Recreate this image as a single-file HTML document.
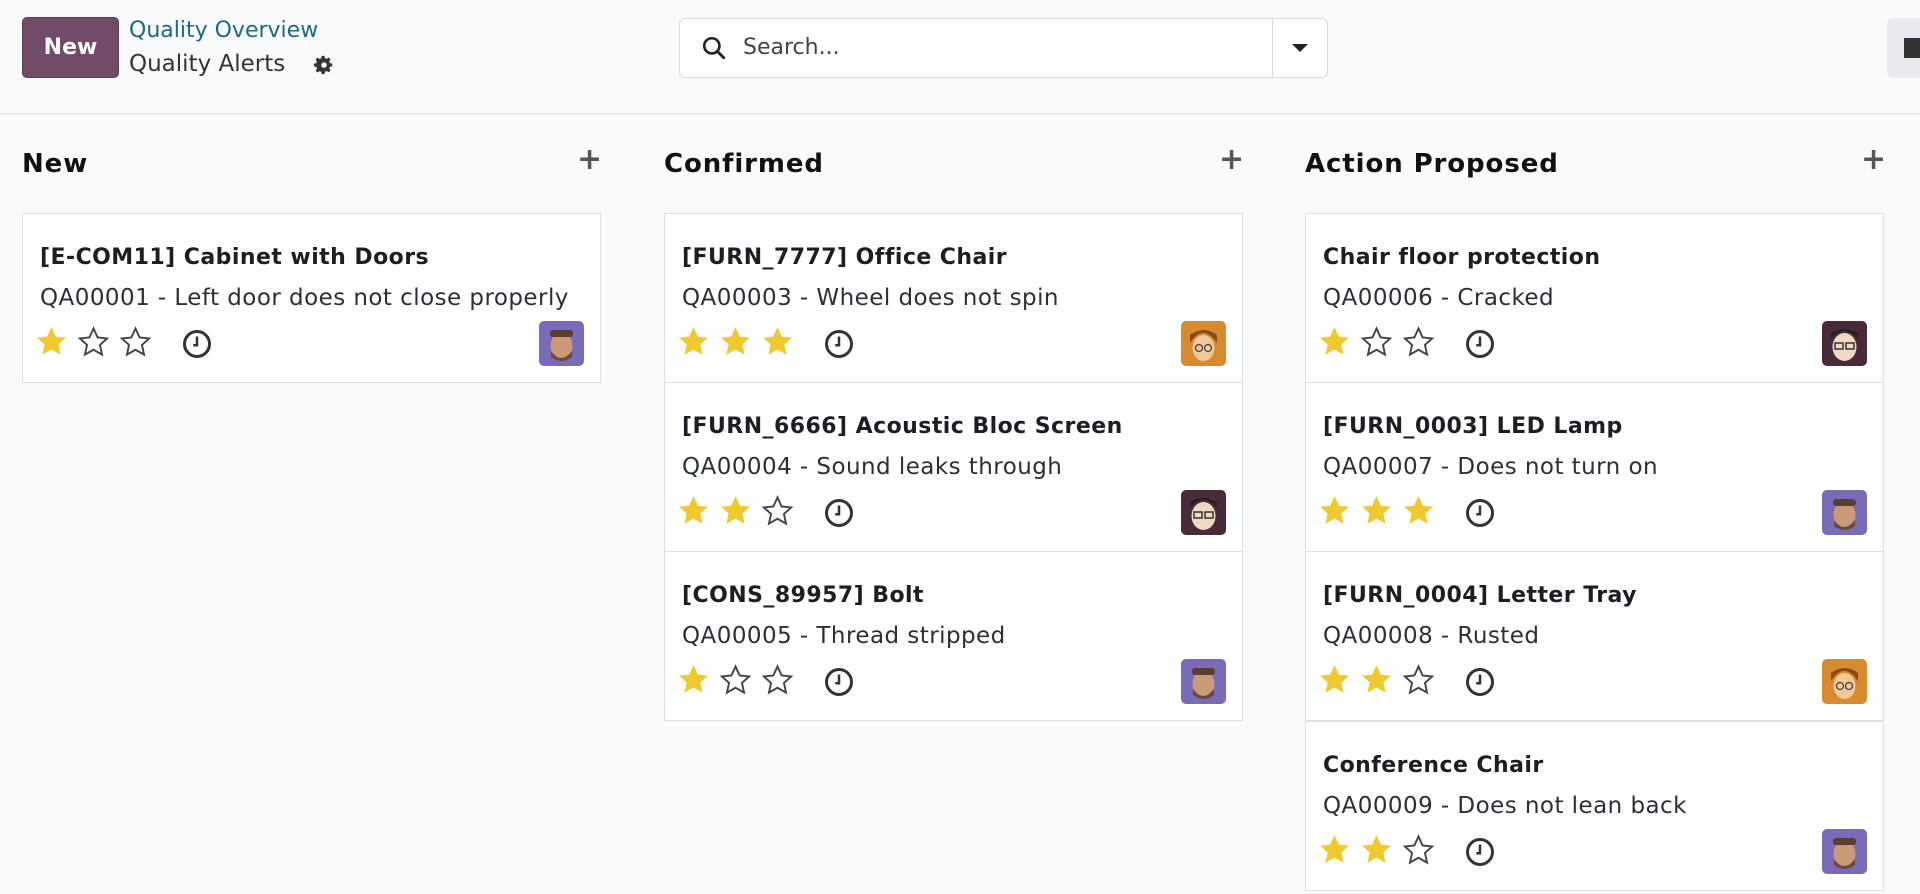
<!DOCTYPE html>
<html><head><meta charset="utf-8"><style>
*{box-sizing:border-box;margin:0;padding:0}
body{width:1920px;height:894px;overflow:hidden;background:#f9fafb;font-family:"DejaVu Sans","Liberation Sans",sans-serif;color:#1f2328;position:relative}
.a{position:absolute;white-space:nowrap}
.newbtn{left:22px;top:17px;width:97px;height:61px;background:#714b67;border:1px solid #5b3c53;border-radius:5px;color:#fff;font-size:22px;font-weight:bold;display:flex;align-items:center;justify-content:center}
.hdrline{left:0;top:113px;width:1920px;height:2px;background:#e4e6e9}
.search{left:679px;top:18px;width:649px;height:60px;border:1px solid #d8dadd;border-radius:6px;background:#fff}
.col{font-size:26px;font-weight:bold;color:#111;letter-spacing:0.9px}
.plus{font-size:30px;font-weight:bold;color:#555}
.card{position:absolute;background:#fff;border:1px solid #dde0e4;width:579px;height:170px}
.card .t{position:absolute;left:17px;top:31px;font-size:22px;font-weight:bold;color:#1b1f24;white-space:nowrap;letter-spacing:0.45px}
.card .s{position:absolute;left:17px;top:71px;font-size:23px;color:#2b2f36;white-space:nowrap;letter-spacing:0.45px}
.card .st{position:absolute;left:12px;top:111px;display:flex;gap:9px}
.card .cl{position:absolute;left:159px;top:115px}
.card .av{position:absolute;right:16px;top:107px;width:45px;height:45px;border-radius:5px;overflow:hidden}
</style></head><body>
<div class="a newbtn">New</div>
<div class="a" style="left:129px;top:18px;font-size:22px;color:#1d6a80">Quality Overview</div>
<div class="a" style="left:129px;top:51px;font-size:23px;color:#333">Quality Alerts</div>
<svg class="a" style="left:313px;top:54px" width="22" height="22" viewBox="0 0 24 24"><path fill="#333" d="M12 8a4 4 0 100 8 4 4 0 000-8zm9 5.5v-3l-2.6-.5a7 7 0 00-.8-1.9l1.5-2.2-2.1-2.1-2.2 1.5a7 7 0 00-1.9-.8L12.5 2h-3l-.5 2.6a7 7 0 00-1.9.8L4.9 3.9 2.8 6l1.5 2.2a7 7 0 00-.8 1.9L1 10.5v3l2.6.5c.2.7.4 1.3.8 1.9l-1.5 2.2 2.1 2.1 2.2-1.5c.6.4 1.2.6 1.9.8l.4 2.5h3l.5-2.6c.7-.2 1.3-.4 1.9-.8l2.2 1.5 2.1-2.1-1.5-2.2c.4-.6.6-1.2.8-1.9z"/><circle cx="12" cy="12" r="3" fill="#f9fafb"/></svg>
<div class="a search"></div>
<svg class="a" style="left:701px;top:35px" width="26" height="26" viewBox="0 0 24 24"><circle cx="10" cy="10" r="7" fill="none" stroke="#222" stroke-width="2.4"/><path d="M15 15l6 6" stroke="#222" stroke-width="2.6" stroke-linecap="round"/></svg>
<div class="a" style="left:743px;top:35px;font-size:22px;color:#444">Search...</div>
<div class="a" style="left:1272px;top:19px;width:1px;height:58px;background:#d8dadd"></div>
<div class="a" style="left:1292px;top:44px;width:0;height:0;border-left:8px solid transparent;border-right:8px solid transparent;border-top:8px solid #222"></div>
<div class="a" style="left:1887px;top:18px;width:60px;height:60px;background:#e8eaed;border-radius:6px"></div>
<div class="a" style="left:1904px;top:38px;width:16px;height:20px;background:#333"></div>
<div class="a hdrline"></div>

<div class="a col" style="left:22px;top:149px">New</div>
<div class="a plus" style="left:577px;top:142px">+</div>
<div class="a col" style="left:664px;top:149px">Confirmed</div>
<div class="a plus" style="left:1219px;top:142px">+</div>
<div class="a col" style="left:1305px;top:149px">Action Proposed</div>
<div class="a plus" style="left:1861px;top:142px">+</div>

<svg width="0" height="0" style="position:absolute"><defs>
<symbol id="sf" viewBox="0 0 24 24"><path fill="#f1c92c" d="M12 1.5l3.2 7 7.3.7-5.5 5 1.6 7.4L12 17.8l-6.6 3.8L7 14.2l-5.5-5 7.3-.7z"/></symbol>
<symbol id="se" viewBox="0 0 24 24"><path fill="none" stroke="#444" stroke-width="1.4" d="M12 2.5l3 6.6 6.9.7-5.2 4.7 1.5 7L12 18l-6.2 3.5 1.5-7L2.1 9.8 9 9.1z"/></symbol>
<symbol id="ck" viewBox="0 0 24 24"><circle cx="12" cy="12" r="10" fill="none" stroke="#333" stroke-width="2.4"/><path d="M12 6v7H9" fill="none" stroke="#333" stroke-width="2"/></symbol>
<symbol id="fa" viewBox="0 0 45 45"><ellipse cx="22.5" cy="25" rx="11" ry="14" fill="#c99a78"/><rect x="11" y="9" width="23" height="7" rx="3" fill="#5a3e2e"/><path d="M12 30q10 14 21 0v6q-10 8-21 0z" fill="#6b4a36"/></symbol>
<symbol id="fb" viewBox="0 0 45 45"><ellipse cx="22.5" cy="26" rx="12" ry="14" fill="#f2d9c2"/><path d="M9 18q13-16 27 0v-6q-13-8-27 0z" fill="#222"/><rect x="13" y="22" width="8" height="6" fill="none" stroke="#333" stroke-width="1.5"/><rect x="24" y="22" width="8" height="6" fill="none" stroke="#333" stroke-width="1.5"/></symbol>
<symbol id="fc" viewBox="0 0 45 45"><ellipse cx="22.5" cy="27" rx="11" ry="13" fill="#f0c89a"/><path d="M9 22q13-20 27 0v-8q-13-10-27 0z" fill="#8a4a1e"/><circle cx="18" cy="27" r="3.5" fill="none" stroke="#444" stroke-width="1.3"/><circle cx="27" cy="27" r="3.5" fill="none" stroke="#444" stroke-width="1.3"/></symbol>
</defs></svg>

<div class="card" style="left:22px;top:213px"><div class="t">[E-COM11] Cabinet with Doors</div><div class="s">QA00001 - Left door does not close properly</div>
<div class="st"><svg width="33" height="33"><use href="#sf"/></svg><svg width="33" height="33"><use href="#se"/></svg><svg width="33" height="33"><use href="#se"/></svg></div><svg class="cl" width="30" height="30"><use href="#ck"/></svg><div class="av" style="background:#7a6bb8"><svg width="45" height="45"><use href="#fa"/></svg></div></div>

<div class="card" style="left:664px;top:213px"><div class="t">[FURN_7777] Office Chair</div><div class="s">QA00003 - Wheel does not spin</div>
<div class="st"><svg width="33" height="33"><use href="#sf"/></svg><svg width="33" height="33"><use href="#sf"/></svg><svg width="33" height="33"><use href="#sf"/></svg></div><svg class="cl" width="30" height="30"><use href="#ck"/></svg><div class="av" style="background:#d98a2c"><svg width="45" height="45"><use href="#fc"/></svg></div></div>
<div class="card" style="left:664px;top:382px"><div class="t">[FURN_6666] Acoustic Bloc Screen</div><div class="s">QA00004 - Sound leaks through</div>
<div class="st"><svg width="33" height="33"><use href="#sf"/></svg><svg width="33" height="33"><use href="#sf"/></svg><svg width="33" height="33"><use href="#se"/></svg></div><svg class="cl" width="30" height="30"><use href="#ck"/></svg><div class="av" style="background:#4a2a3a"><svg width="45" height="45"><use href="#fb"/></svg></div></div>
<div class="card" style="left:664px;top:551px"><div class="t">[CONS_89957] Bolt</div><div class="s">QA00005 - Thread stripped</div>
<div class="st"><svg width="33" height="33"><use href="#sf"/></svg><svg width="33" height="33"><use href="#se"/></svg><svg width="33" height="33"><use href="#se"/></svg></div><svg class="cl" width="30" height="30"><use href="#ck"/></svg><div class="av" style="background:#7a6bb8"><svg width="45" height="45"><use href="#fa"/></svg></div></div>

<div class="card" style="left:1305px;top:213px"><div class="t">Chair floor protection</div><div class="s">QA00006 - Cracked</div>
<div class="st"><svg width="33" height="33"><use href="#sf"/></svg><svg width="33" height="33"><use href="#se"/></svg><svg width="33" height="33"><use href="#se"/></svg></div><svg class="cl" width="30" height="30"><use href="#ck"/></svg><div class="av" style="background:#4a2a3a"><svg width="45" height="45"><use href="#fb"/></svg></div></div>
<div class="card" style="left:1305px;top:382px"><div class="t">[FURN_0003] LED Lamp</div><div class="s">QA00007 - Does not turn on</div>
<div class="st"><svg width="33" height="33"><use href="#sf"/></svg><svg width="33" height="33"><use href="#sf"/></svg><svg width="33" height="33"><use href="#sf"/></svg></div><svg class="cl" width="30" height="30"><use href="#ck"/></svg><div class="av" style="background:#7a6bb8"><svg width="45" height="45"><use href="#fa"/></svg></div></div>
<div class="card" style="left:1305px;top:551px"><div class="t">[FURN_0004] Letter Tray</div><div class="s">QA00008 - Rusted</div>
<div class="st"><svg width="33" height="33"><use href="#sf"/></svg><svg width="33" height="33"><use href="#sf"/></svg><svg width="33" height="33"><use href="#se"/></svg></div><svg class="cl" width="30" height="30"><use href="#ck"/></svg><div class="av" style="background:#d98a2c"><svg width="45" height="45"><use href="#fc"/></svg></div></div>
<div class="card" style="left:1305px;top:721px"><div class="t">Conference Chair</div><div class="s">QA00009 - Does not lean back</div>
<div class="st"><svg width="33" height="33"><use href="#sf"/></svg><svg width="33" height="33"><use href="#sf"/></svg><svg width="33" height="33"><use href="#se"/></svg></div><svg class="cl" width="30" height="30"><use href="#ck"/></svg><div class="av" style="background:#7a6bb8"><svg width="45" height="45"><use href="#fa"/></svg></div></div>
</body></html>
